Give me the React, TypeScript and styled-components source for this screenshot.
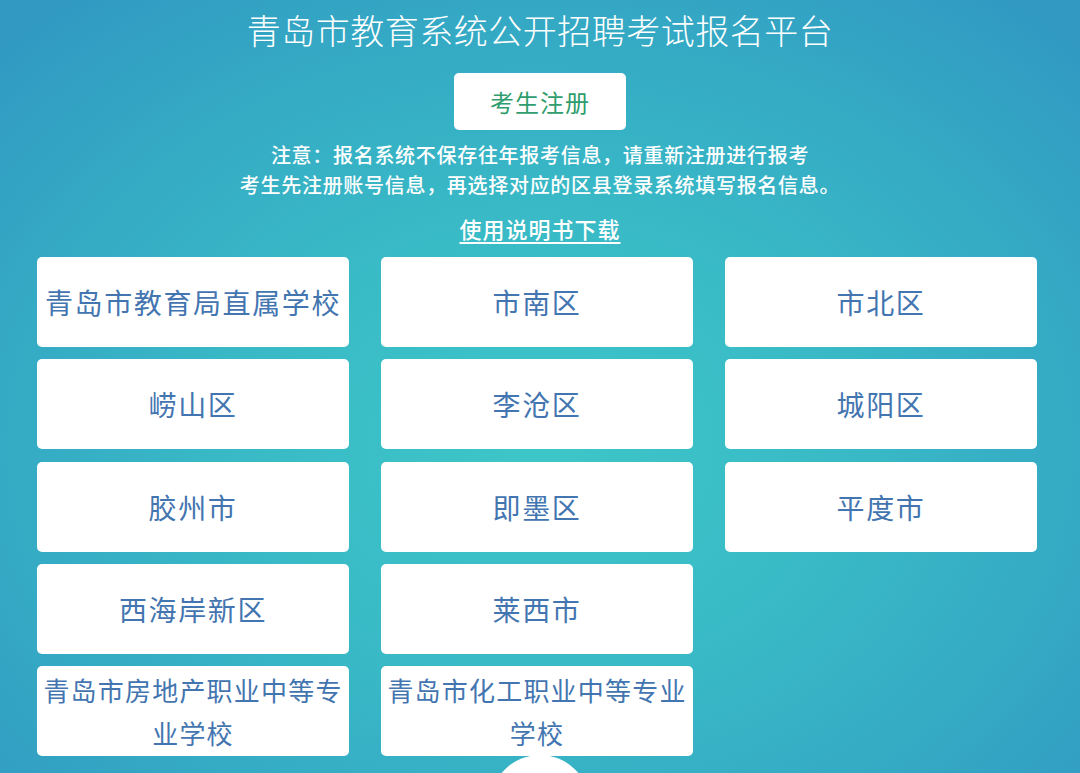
import * as React from 'react'
import styled, { createGlobalStyle } from 'styled-components'

const GlobalStyle = createGlobalStyle`
  html, body {
    margin: 0;
    padding: 0;
  }
  body {
    font-family: 'Noto Sans CJK SC', 'Noto Sans', sans-serif;
    overflow: hidden;
  }
`

const Page = styled.main`
  position: relative;
  min-height: 100vh;
  box-sizing: border-box;
  padding: 9px 0 0;
  display: flex;
  flex-direction: column;
  align-items: center;
  background: radial-gradient(
    ellipse 70% 75% at 50% 58%,
    #3dc6c8 0%,
    #39bac6 40%,
    #34a8c4 75%,
    #3199c2 100%
  );
  overflow: hidden;
`

const Title = styled.h1`
  margin: 0;
  font-size: 34px;
  line-height: 42px;
  font-weight: 300;
  letter-spacing: 0.5px;
  color: #ffffff;
`

const RegisterButton = styled.button`
  margin-top: 22px;
  width: 172px;
  height: 57px;
  border: none;
  border-radius: 5px;
  background: #ffffff;
  color: #2f9d6d;
  font-family: inherit;
  font-size: 24px;
  letter-spacing: 1px;
  cursor: pointer;
`

const Notice = styled.p`
  margin: 10px 0 0;
  font-size: 20px;
  line-height: 30px;
  font-weight: 500;
  letter-spacing: 0.7px;
  color: #ffffff;
  text-align: center;
`

const ManualLink = styled.a`
  margin-top: 13px;
  font-size: 22px;
  line-height: 30px;
  font-weight: 500;
  letter-spacing: 1px;
  color: #ffffff;
  text-decoration: underline;
  text-underline-offset: 4px;
`

const DistrictGrid = styled.div`
  align-self: flex-start;
  margin: 14px 0 0 37px;
  display: grid;
  grid-template-columns: repeat(3, 312px);
  grid-auto-rows: 90px;
  column-gap: 32px;
  row-gap: 12.25px;
`

const DistrictCard = styled.a<{ $small?: boolean }>`
  position: relative;
  z-index: 1;
  display: flex;
  align-items: center;
  justify-content: center;
  padding: 0 2px;
  border-radius: 5px;
  background: #ffffff;
  color: #4375b0;
  text-align: center;
  text-decoration: none;
  font-size: ${p => (p.$small ? '26px' : '28px')};
  line-height: ${p => (p.$small ? '43px' : '40px')};
  letter-spacing: ${p => (p.$small ? '1.2px' : '1.6px')};
  cursor: pointer;
`

const FloatCircle = styled.div`
  position: absolute;
  left: 50%;
  top: 755px;
  width: 100px;
  height: 100px;
  margin-left: -50px;
  border-radius: 50%;
  background: #ffffff;
`

const districts: { name: string; small?: boolean }[] = [
  { name: '青岛市教育局直属学校' },
  { name: '市南区' },
  { name: '市北区' },
  { name: '崂山区' },
  { name: '李沧区' },
  { name: '城阳区' },
  { name: '胶州市' },
  { name: '即墨区' },
  { name: '平度市' },
  { name: '西海岸新区' },
  { name: '莱西市' },
  { name: '' },
  { name: '青岛市房地产职业中等专业学校', small: true },
  { name: '青岛市化工职业中等专业学校', small: true },
]

const App = () => (
  <>
    <GlobalStyle />
    <Page>
      <Title>青岛市教育系统公开招聘考试报名平台</Title>
      <RegisterButton>考生注册</RegisterButton>
      <Notice>
        注意：报名系统不保存往年报考信息，请重新注册进行报考
        <br />
        考生先注册账号信息，再选择对应的区县登录系统填写报名信息。
      </Notice>
      <ManualLink href="#">使用说明书下载</ManualLink>
      <DistrictGrid>
        {districts.map((d, i) =>
          d.name ? (
            <DistrictCard key={i} href="#" $small={d.small}>
              {d.name}
            </DistrictCard>
          ) : (
            <div key={i} />
          )
        )}
      </DistrictGrid>
      <FloatCircle />
    </Page>
  </>
)

export default App
